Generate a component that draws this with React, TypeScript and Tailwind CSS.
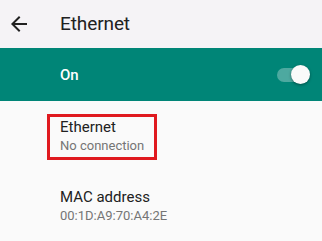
const BackArrow = () => (
  <svg width="24" height="24" viewBox="0 0 24 24" className="text-[#212121]">
    <path d="M20 11H7.83l5.59-5.59L12 4l-8 8 8 8 1.41-1.41L7.83 13H20v-2z" fill="currentColor" />
  </svg>
);

const App = () => {
  return (
    <div className="w-[322px] h-[241px] bg-[#fafafa] overflow-hidden font-['Roboto',sans-serif]">
      <div className="h-12 bg-[#f5f3f6] flex items-center">
        <div className="w-[60px] pl-[7px] flex items-center">
          <BackArrow />
        </div>
        <span className="text-[19px] tracking-[-0.1px] text-[#212121]">Ethernet</span>
      </div>
      <div className="h-[53px] bg-[#008577] flex items-center justify-between pl-[60px] pr-[12px]">
        <span className="text-[15px] font-medium text-white pt-[2px]">On</span>
        <div className="relative w-[31px] h-5 flex items-center">
          <div className="ml-[-2px] w-[26px] h-[14px] rounded-full bg-white/30" />
          <div className="absolute right-0 top-[0px] w-[19px] h-[19px] rounded-full bg-[#fafafa] shadow-[0_1px_3px_rgba(0,0,0,0.4)]" />
        </div>
      </div>
      <div className="pt-[13px] pl-[47px]">
        <div className="w-[110px] border-[3px] border-[#e0191f] pl-[10px] pb-[2px]">
          <div className="text-[15px] leading-[20px] text-[#212121]">Ethernet</div>
          <div className="text-[13px] leading-[18px] text-[#757575]">No connection</div>
        </div>
      </div>
      <div className="pl-[60px] pt-[27px]">
        <div className="text-[15px] leading-[20px] text-[#212121]">MAC address</div>
        <div className="text-[13px] leading-[18px] text-[#757575]">00:1D:A9:70:A4:2E</div>
      </div>
    </div>
  );
};

export default App;
